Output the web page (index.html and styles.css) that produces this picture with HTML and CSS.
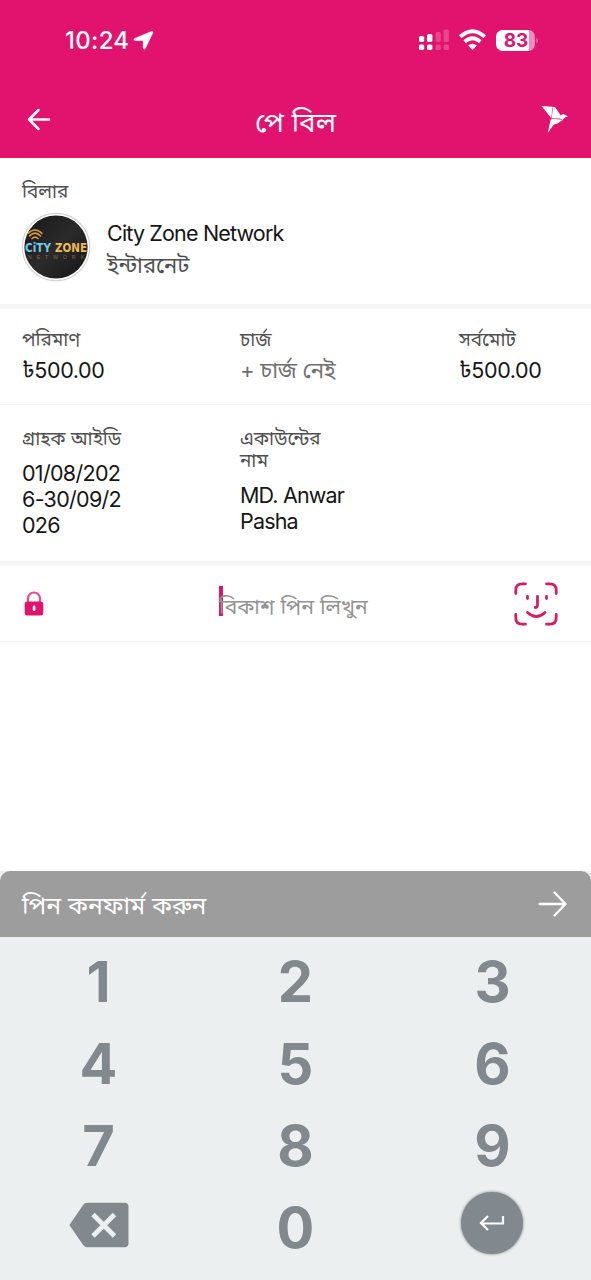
FILE: index.html
```html
<!DOCTYPE html>
<html lang="bn">
<head>
<meta charset="utf-8">
<title>পে বিল</title>
<link rel="stylesheet" href="styles.css">
</head>
<body>
<div class="screen">
  <header class="header">
    <div class="status">
      <span class="time">10:24</span>
      <svg class="location" width="21" height="21" viewBox="0 0 21 21"><path d="M18.400 1.600 2 8.400c-1.500.6-1.200 2 .3 2h7.300c.5 0 .7.2.7.700v6.800c0 1.600 1.500 1.900 2.100.4L19.700 2.900c.4-1-.3-1.700-1.300-1.300Z" fill="#fff" stroke="#fff" stroke-width=".7"/></svg>
      <svg class="signals" width="121" height="24" viewBox="0 0 121 24">
        <g fill="#fff"><rect x="1" y="8" width="5.2" height="6" rx="1.5"/><rect x="9" y="6" width="5.4" height="8" rx="1.5"/><rect x="1" y="16.500" width="5.2" height="5.5" rx="1.5"/><rect x="9" y="16.500" width="5.4" height="5.5" rx="1.5"/></g>
        <g fill="#fff" opacity=".22"><rect x="17.6" y="4" width="5.2" height="10" rx="1.5"/><rect x="25.6" y="1.500" width="5.2" height="12.5" rx="1.5"/><rect x="17.6" y="16.5" width="5.2" height="5.5" rx="1.5"/><rect x="25.6" y="16.5" width="5.2" height="5.5" rx="1.5"/></g>
        <g fill="none" stroke="#fff" stroke-width="3.9"><path d="M42.300 8.700Q54.500-2.300 66.700 8.700"/><path d="M46.700 13.700Q54.500 6.700 62.300 13.700"/></g>
        <path d="M50.200 17.600q4.300-3.600 8.600 0L54.500 21.900Z" fill="#fff"/>
        <clipPath id="cell"><rect x="78" y="2" width="39" height="21" rx="6.500"/></clipPath>
        <g clip-path="url(#cell)"><rect x="78" y="2" width="33" height="21" fill="#fff"/><rect x="111" y="2" width="6" height="21" fill="#f28bb8"/></g>
        <path d="M118.500 9.500q2.500 3 0 6Z" fill="#f28bb8"/>
        <text class="charge" x="98" y="19.300" text-anchor="middle">83</text>
      </svg>
    </div>
    <nav class="nav">
      <svg width="26" height="26" viewBox="0 0 26 26" fill="none" stroke="#fff" stroke-width="2.500" stroke-linecap="round" stroke-linejoin="round"><path d="M23 13.500H3M12.500 4 3 13.500l9.500 9.500"/></svg>
      <h1 class="title">পে বিল</h1>
      <svg width="28" height="29" viewBox="0 0 28 29"><g fill="#fff"><path d="M.5 1 11.700 1.700 10.200 13Z"/><path d="M12.200 1.800 14.200 2.300 22 13.800 10.600 13.300Z"/><path d="M10.300 13.800 22 14.700 16.500 18.400 9.800 20.400Z"/><path d="M9.600 14.500 12.800 19.500 6.800 28Z"/><path d="M18.500 11 22.300 9l5 2.600-3 .6L21.200 15Z"/></g></svg>
    </nav>
  </header>

  <section class="biller">
    <div class="label">বিলার</div>
    <div class="biller-row">
      <svg class="logo" width="70" height="70" viewBox="0 0 70 70">
        <defs><linearGradient id="dark" x1="0" y1="0" x2="1" y2="1"><stop stop-color="#171719"/><stop offset=".5" stop-color="#2b2b2c"/><stop offset="1" stop-color="#151517"/></linearGradient></defs>
        <circle cx="35" cy="34" r="33.700" fill="#fff" stroke="#d2d2d2" stroke-width="1.200"/>
        <circle cx="35" cy="34" r="31.600" fill="url(#dark)"/>
        <g fill="none" stroke="#d79b32" stroke-width="1.700" stroke-linecap="round"><path d="M7 20.500Q14 13.500 21 20.500"/><path d="M8.500 23Q14 17.500 19.500 23"/><path d="M11 25.500Q14 22.700 17 25.500"/></g>
        <text class="logo-name" y="38.800"><tspan x="4" fill="#72cce7" textLength="26" lengthAdjust="spacingAndGlyphs">CiTY</tspan><tspan x="34" fill="#efbd55" textLength="32" lengthAdjust="spacingAndGlyphs">ZONE</tspan></text>
        <text class="logo-sub" x="7" y="46" textLength="56">NETWORK</text>
      </svg>
      <div>
        <div class="value name">City Zone Network</div>
        <div class="category">ইন্টারনেট</div>
      </div>
    </div>
  </section>

  <section class="grid amounts">
    <div><div class="label">পরিমাণ</div><div class="value amount">৳500.00</div></div>
    <div><div class="label">চার্জ</div><div class="value muted">+ চার্জ নেই</div></div>
    <div><div class="label">সর্বমোট</div><div class="value amount">৳500.00</div></div>
  </section>

  <section class="grid account">
    <div><div class="label">গ্রাহক আইডি</div><div class="value lines id">01/08/202<br>6-30/09/2<br>026</div></div>
    <div><div class="label">একাউন্টের<br>নাম</div><div class="value lines">MD. Anwar<br>Pasha</div></div>
  </section>

  <section class="pin">
    <svg width="20" height="25" viewBox="0 0 20 25"><path d="M4 12V7.500a6 6 0 0 1 12 0V12" fill="none" stroke="#e84d92" stroke-width="2.200"/><rect x=".7" y="10.500" width="18.600" height="14" rx="2.500" fill="#e2136e"/><rect x="8.800" y="14.500" width="2.600" height="5.500" rx="1.300" fill="#fff"/></svg>
    <div class="pin-field"><span class="caret"></span><span class="placeholder">বিকাশ পিন লিখুন</span></div>
    <svg width="44" height="44" viewBox="0 0 44 44" fill="none" stroke="#d81b66" stroke-width="2.800" stroke-linecap="round" stroke-linejoin="round"><path d="M1.800 11.500V8Q1.800 1.800 8 1.800h3.500M32.500 1.800H36Q42.200 1.800 42.200 8v3.500M42.200 32.500V36Q42.200 42.200 36 42.200h-3.500M11.500 42.200H8Q1.800 42.200 1.800 36v-3.500M13.500 14.500v2M32.500 14.500v2M23.500 14.500v8.500q0 2.500-2.300 2.500M13.500 30.500q9 8 17.500 0"/></svg>
  </section>

  <div class="space"></div>

  <div class="confirm-wrap"><div class="confirm">
    <span class="confirm-text">পিন কনফার্ম করুন</span>
    <svg width="30" height="28" viewBox="0 0 30 28" fill="none" stroke="#fff" stroke-width="2.300" stroke-linecap="round" stroke-linejoin="round"><path d="M1.500 14h26M16.500 2.500 27.500 14l-11 11.500"/></svg>
  </div></div>
  <div class="keypad">
    <span>1</span><span>2</span><span>3</span>
    <span>4</span><span>5</span><span>6</span>
    <span>7</span><span>8</span><span>9</span>
    <span><svg class="erase" width="60" height="46" viewBox="0 0 60 46"><path d="M.4 23 14.500 2.500Q15.800.700 18 .700H55.500Q59.500.700 59.500 4.700V41.300Q59.500 45.300 55.500 45.300H18Q15.800 45.300 14.500 43.500Z" fill="#81898f"/><path d="m24 12.500 21.500 21.500m0-21.500L24 34" stroke="#ebeff0" stroke-width="4.800"/></svg></span>
    <span>0</span>
    <span><i class="enter"><svg width="26" height="18" viewBox="0 0 26 18" fill="none" stroke="#fff" stroke-width="2.200"><path d="M24 2v7.500H2M9 2 2 9l7 7"/></svg></i></span>
  </div>
</div>
</body>
</html>
```
FILE: styles.css
```css
* { box-sizing: border-box; }
body { margin: 0; background: #fff; font-family: Inter, "Noto Sans Bengali", "Noto Sans", sans-serif; color: #161616; }
.screen { width: 591px; height: 1280px; display: flex; flex-direction: column; overflow: hidden; }
svg { display: block; flex: none; }
.header { height: 158px; flex: none; background: #e2136e; color: #fff; }
.status { height: 80px; padding: 0 52px 0 65px; display: flex; align-items: center; }
.time { font-size: 24px; font-weight: 500; line-height: 30px; letter-spacing: 0.3px; padding-top: 2px; }
.location { margin-left: 4px; }
.signals { margin-left: auto; }
.charge { font-size: 19px; font-weight: 700; fill: #e2136e; }
.nav { height: 78px; padding: 0 22px 0 26px; display: flex; align-items: center; justify-content: space-between; }
.title { margin: 0; padding: 5px 2px 0 0; font-size: 27.8px; line-height: 36px; font-weight: 400; }
.biller { height: 151px; flex: none; padding: 23px 22px 0; border-bottom: 5px solid #f6f6f6; }
.label { font-size: 18.9px; line-height: 22px; color: #505050; white-space: nowrap; }
.biller-row { display: flex; gap: 16px; padding-top: 10px; margin-left: -1px; }
.value { font-size: 21.5px; line-height: 26px; white-space: nowrap; letter-spacing: -0.83px; }
.name { margin-top: 7px; }
.category { font-size: 22px; line-height: 32px; margin-top: 3px; color: #505050; }
.logo-name { font: 700 11.5px "DejaVu Sans", sans-serif; }
.logo-sub { font: 5px "Liberation Sans", sans-serif; fill: #8c6c3b; }
.grid { display: grid; grid-template-columns: 218px 219px 1fr; padding-left: 22px; flex: none; }
.amounts { height: 96px; padding-top: 20px; border-bottom: 1px solid #f1f1f1; }
.amounts .value { margin-top: 6px; }
.value.amount { letter-spacing: -0.4px; }
.value.muted { color: #707070; font-size: 22.2px; letter-spacing: -0.3px; }
.account { height: 161px; padding-top: 23px; border-bottom: 5px solid #f6f6f6; }
.lines { margin-top: 10px; }
.value.id { letter-spacing: -0.7px; }
.pin { height: 76px; flex: none; display: grid; grid-template-columns: 20px 1fr 44px; align-items: center; padding: 0 33px 0 24px; border-bottom: 1px solid #f1f1f1; }
.pin-field { position: relative; justify-self: start; margin-left: 175px; padding-top: 5px; color: #939393; font-size: 21.2px; line-height: 30px; white-space: nowrap; }
.placeholder { position: relative; }
.caret { position: absolute; left: 0; top: 0; width: 4px; height: 30px; background: #e2136e; }
.space { flex: 1; }
.confirm-wrap { height: 66px; flex: none; background: #eee; }
.confirm { height: 66px; padding: 0 23px 0 22px; display: flex; justify-content: space-between; align-items: center; color: #fff; background: #9d9d9d; border-radius: 10px 10px 0 0; }
.confirm-text { font-size: 24.7px; line-height: 32px; font-weight: 400; padding-top: 2px; }
.keypad { height: 343px; flex: none; display: grid; grid-template-columns: repeat(3, 1fr); grid-auto-rows: 82px; padding-top: 4px; background: #ebeff0; }
.keypad span { display: flex; justify-content: center; align-items: center; color: #81898f; font-size: 56px; line-height: 82px; font-weight: 700; }
.enter { width: 62px; height: 62px; margin: 0 2px 10px 0; display: flex; align-items: center; justify-content: center; background: #81898f; border-radius: 50%; box-shadow: 0 0 3px #777; }
.erase { margin-bottom: 7px; }
```
